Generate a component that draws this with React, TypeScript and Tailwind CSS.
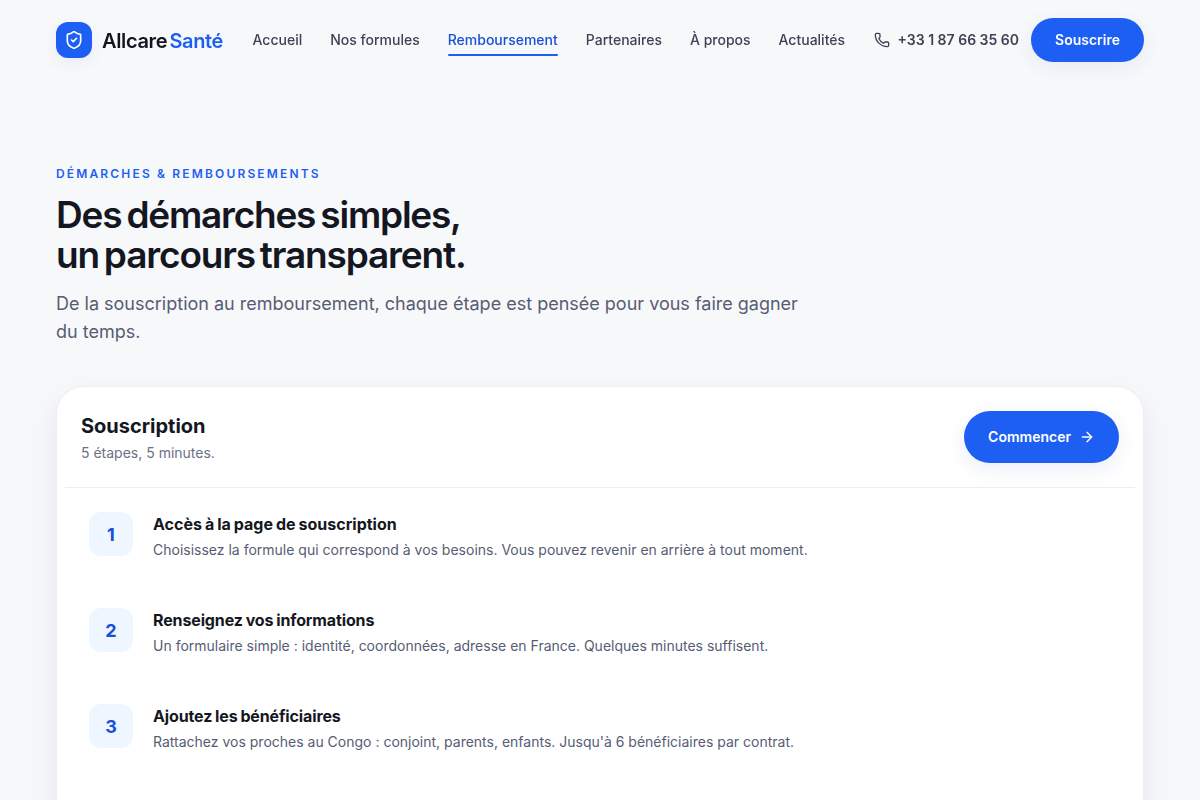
import { ArrowRight, Phone, ShieldCheck } from "lucide-react";
import clsx from "clsx";

const NAV_LINKS = [
  { label: "Accueil", href: "#accueil" },
  { label: "Nos formules", href: "#formules" },
  { label: "Remboursement", href: "#remboursement", active: true },
  { label: "Partenaires", href: "#partenaires" },
  { label: "À propos", href: "#a-propos" },
  { label: "Actualités", href: "#actualites" },
];

const STEPS = [
  {
    title: "Accès à la page de souscription",
    text: "Choisissez la formule qui correspond à vos besoins. Vous pouvez revenir en arrière à tout moment.",
    titleClass: "[word-spacing:-0.05em]",
  },
  {
    title: "Renseignez vos informations",
    text: "Un formulaire simple : identité, coordonnées, adresse en France. Quelques minutes suffisent.",
    titleClass: "tracking-[-0.008em] [word-spacing:-0.05em]",
  },
  {
    title: "Ajoutez les bénéficiaires",
    text: "Rattachez vos proches au Congo : conjoint, parents, enfants. Jusqu'à 6 bénéficiaires par contrat.",
    titleClass: "tracking-[-0.008em] [word-spacing:-0.05em]",
  },
];

function Header() {
  return (
    <header className="sticky top-0 z-10 h-20 backdrop-blur-sm">
      <div className="mx-auto flex h-full w-[1088px] items-center justify-between">
        <a href="#accueil" className="flex items-center gap-2.5">
          <span className="flex size-9 items-center justify-center rounded-xl bg-[#1d5ff2] text-white shadow-[0_6px_16px_rgba(29,63,180,0.06)]">
            <ShieldCheck className="size-5" strokeWidth={2} />
          </span>
          <span className="whitespace-nowrap pt-0.5 text-xl font-semibold tracking-[-0.018em] text-[#12141f] [word-spacing:-0.12em]">
            Allcare <span className="text-[#1d5ff2]">Santé</span>
          </span>
        </a>

        <nav className="flex items-center gap-7 pl-px">
          {NAV_LINKS.map((link) => (
            <a
              key={link.label}
              href={link.href}
              className={clsx(
                "relative whitespace-nowrap py-1.5 text-sm font-medium",
                link.active ? "text-[#1a4fd6]" : "text-[#3d4256]",
              )}
            >
              {link.label}
              {link.active && (
                <span className="absolute inset-x-0 bottom-0 h-0.5 rounded-full bg-[#1d5ff2]" />
              )}
            </a>
          ))}
        </nav>

        <div className="flex items-center gap-3">
          <a
            href="tel:+33187663560"
            className="flex items-center gap-2 whitespace-nowrap text-sm font-semibold text-[#3d4256]"
          >
            <Phone className="size-4" strokeWidth={2} />
            +33 1 87 66 35 60
          </a>
          <a
            href="#souscrire"
            className="flex h-11 items-center rounded-full bg-[#1d5ff2] px-6 text-sm font-semibold text-white shadow-[0_6px_20px_rgba(29,63,180,0.07)]"
          >
            Souscrire
          </a>
        </div>
      </div>
    </header>
  );
}

function Intro() {
  return (
    <section>
      <p className="text-xs font-semibold uppercase leading-4 tracking-[0.18em] text-[#1d5ff2]">
        Démarches &amp; remboursements
      </p>
      <h1 className="mt-[13px] text-[37px] font-semibold leading-10 text-[#141722]">
        <span className="block tracking-[-0.033em] [word-spacing:-0.08em]">Des démarches simples,</span>
        <span className="block tracking-[-0.031em] [word-spacing:-0.09em]">un parcours transparent.</span>
      </h1>
      <p className="mt-[15px] w-[768px] text-lg leading-7 text-[#565d73]">
        De la souscription au remboursement, chaque étape est pensée pour vous faire gagner du temps.
      </p>
    </section>
  );
}

function StepRow(props: { index: number; title: string; text: string; titleClass: string }) {
  return (
    <li className="flex h-24 items-start gap-5 px-6 pt-6">
      <span className="flex size-11 shrink-0 items-center justify-center rounded-xl bg-[#eef6ff] pt-0.5 text-lg font-bold text-[#1a4fd6]">
        {props.index}
      </span>
      <div>
        <h3 className={clsx("text-base font-bold leading-6 text-[#141722]", props.titleClass)}>
          {props.title}
        </h3>
        <p className="mt-[3px] text-sm leading-[22px] text-[#565d73]">{props.text}</p>
      </div>
    </li>
  );
}

function SubscriptionCard() {
  return (
    <section className="mt-10 h-[600px] rounded-[28px] border border-[#edeef3] bg-white px-2 shadow-[0_12px_32px_rgba(20,24,60,0.07)]">
      <div className="flex h-[101px] items-center justify-between border-b border-[#edeef2] px-4">
        <div className="pt-0.5">
          <h2 className="text-xl font-bold leading-7 text-[#141722]">Souscription</h2>
          <p className="mt-0.5 text-sm leading-[22px] text-[#6b7286]">5 étapes, 5 minutes.</p>
        </div>
        <a
          href="#souscrire"
          className="flex h-13 items-center gap-2 rounded-full bg-[#1d5ff2] px-6 text-sm font-semibold text-white shadow-[0_6px_20px_rgba(29,63,180,0.09)]"
        >
          Commencer
          <ArrowRight className="size-4" strokeWidth={2} />
        </a>
      </div>
      <ol>
        {STEPS.map((step, i) => (
          <StepRow key={step.title} index={i + 1} {...step} />
        ))}
      </ol>
    </section>
  );
}

export default function App() {
  return (
    <div className="h-screen overflow-hidden bg-[#f7f8fa] font-['Inter',sans-serif]">
      <Header />
      <main className="mx-auto w-[1088px] pt-[86px]">
        <Intro />
        <SubscriptionCard />
      </main>
    </div>
  );
}
